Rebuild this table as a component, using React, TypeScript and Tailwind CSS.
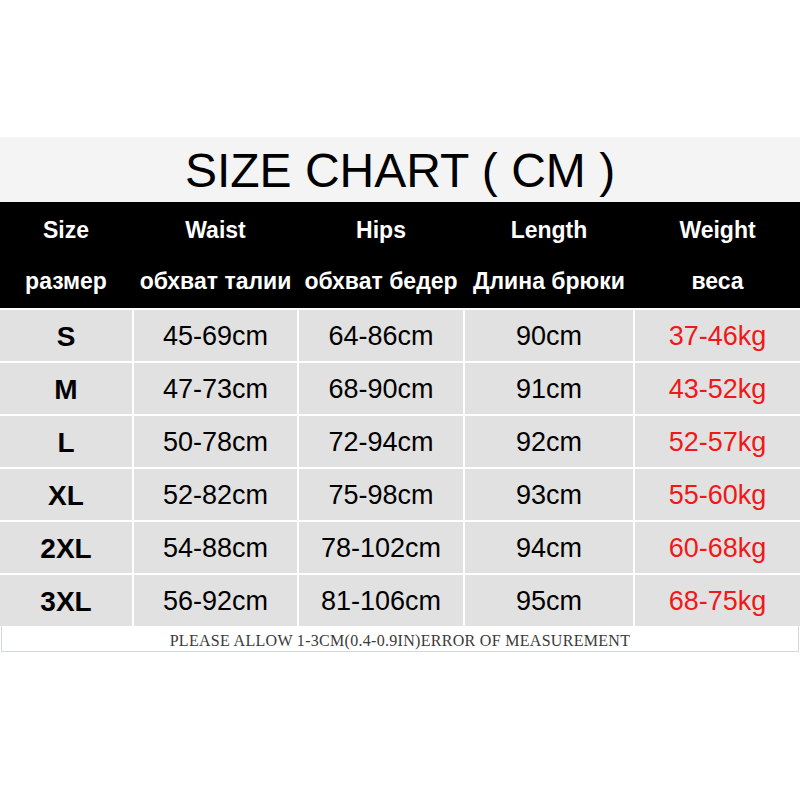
import React from 'react';

const cols = 'grid grid-cols-[132px_163px_164px_168px_165px] gap-x-[2px]';

const rows = [
  ['S', '45-69cm', '64-86cm', '90cm', '37-46kg'],
  ['M', '47-73cm', '68-90cm', '91cm', '43-52kg'],
  ['L', '50-78cm', '72-94cm', '92cm', '52-57kg'],
  ['XL', '52-82cm', '75-98cm', '93cm', '55-60kg'],
  ['2XL', '54-88cm', '78-102cm', '94cm', '60-68kg'],
  ['3XL', '56-92cm', '81-106cm', '95cm', '68-75kg'],
];

const headEn = ['Size', 'Waist', 'Hips', 'Length', 'Weight'];
const headRu = ['размер', 'обхват талии', 'обхват бедер', 'Длина брюки', 'веса'];

export default function App() {
  return (
    <div className="w-[800px] h-[800px] bg-white font-['Liberation_Sans',Arial,sans-serif] overflow-hidden">
      <div className="h-[137px]" />

      <div className="h-[65px] bg-[#f4f4f4] flex items-center justify-center">
        <h1 className="text-[48px] leading-none text-black pt-[2px]">SIZE CHART ( CM )</h1>
      </div>

      <div className={`${cols} bg-black text-white font-bold text-[23px]`}>
        {headEn.map((h) => (
          <div key={h} className="h-[53px] flex items-center justify-center pt-[3px]">{h}</div>
        ))}
        {headRu.map((h) => (
          <div key={h} className="h-[53px] flex items-center justify-center whitespace-nowrap">{h}</div>
        ))}
      </div>

      <div className={`${cols} gap-y-[2px] pt-[2px]`}>
        {rows.map((r) =>
          r.map((c, i) => (
            <div
              key={r[0] + i}
              className={`h-[51px] bg-[#e1e1e1] flex items-center justify-center pt-[2px] whitespace-nowrap ${
                i === 0 ? 'font-bold text-black text-[28px]' : i === 4 ? 'text-[#f01818] text-[27px]' : 'text-black text-[27px]'
              }`}
            >
              {c}
            </div>
          ))
        )}
      </div>

      {/* measurement note */}
      <div className="h-[26px] mx-[1px] border-x border-b border-[#d3d7de] bg-white flex items-center justify-center">
        <span className="font-['Liberation_Serif',serif] text-[16px] leading-none text-[#3a3a3a] tracking-[0.3px] pt-[5px]">
          PLEASE ALLOW 1-3CM(0.4-0.9IN)ERROR OF MEASUREMENT
        </span>
      </div>
    </div>
  );
}
